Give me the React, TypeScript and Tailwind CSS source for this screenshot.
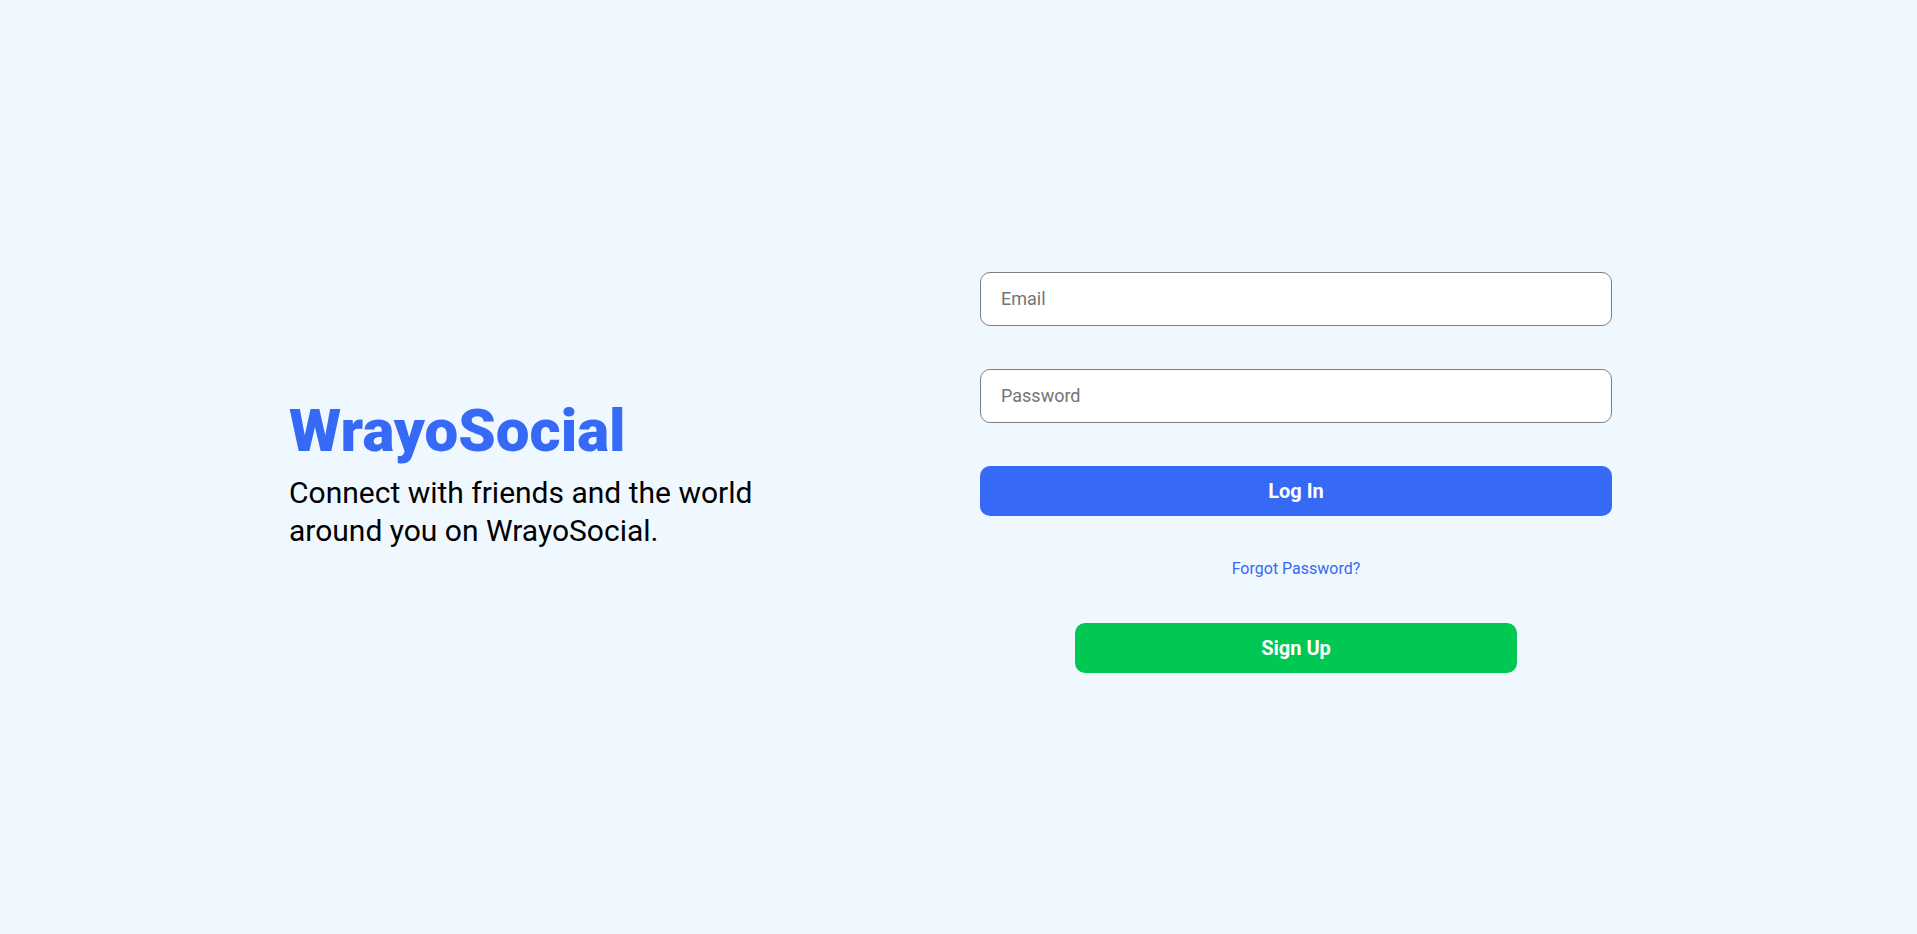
export default function App() {
  return (
    <div
      className="min-h-screen w-full bg-[#f0f8ff] flex items-center justify-center gap-[191px] pr-[16px] pt-[10px]"
      style={{ fontFamily: "Roboto, 'Noto Sans', sans-serif" }}
    >
      {/* Brand side */}
      <div className="w-[500px] flex flex-col">
        <h1 className="text-[60px] leading-[1.2] font-black text-[#3669f5]">WrayoSocial</h1>
        <p className="mt-[7px] text-[30px] leading-[38px] text-black">
          Connect with friends and the world around you on WrayoSocial.
        </p>
      </div>

      {/* Form side */}
      <div className="w-[632px] flex flex-col items-center">
        <input
          type="email"
          placeholder="Email"
          className="w-full h-[54px] px-[20px] rounded-[10px] border border-[#7f7f7f] bg-white text-[18px] placeholder:text-[#757575] outline-none"
        />
        <input
          type="password"
          placeholder="Password"
          className="mt-[43px] w-full h-[54px] px-[20px] rounded-[10px] border border-[#7f7f7f] bg-white text-[18px] placeholder:text-[#757575] outline-none"
        />
        <button className="mt-[43px] w-full h-[50px] rounded-[10px] bg-[#3669f5] text-white text-[20px] font-bold">
          Log In
        </button>
        <a href="#" className="mt-[41px] text-[16px] text-[#3669f5]">
          Forgot Password?
        </a>
        <button className="mt-[42px] w-[442px] h-[50px] rounded-[10px] bg-[#00c853] text-white text-[20px] font-bold">
          Sign Up
        </button>
      </div>
    </div>
  );
}
